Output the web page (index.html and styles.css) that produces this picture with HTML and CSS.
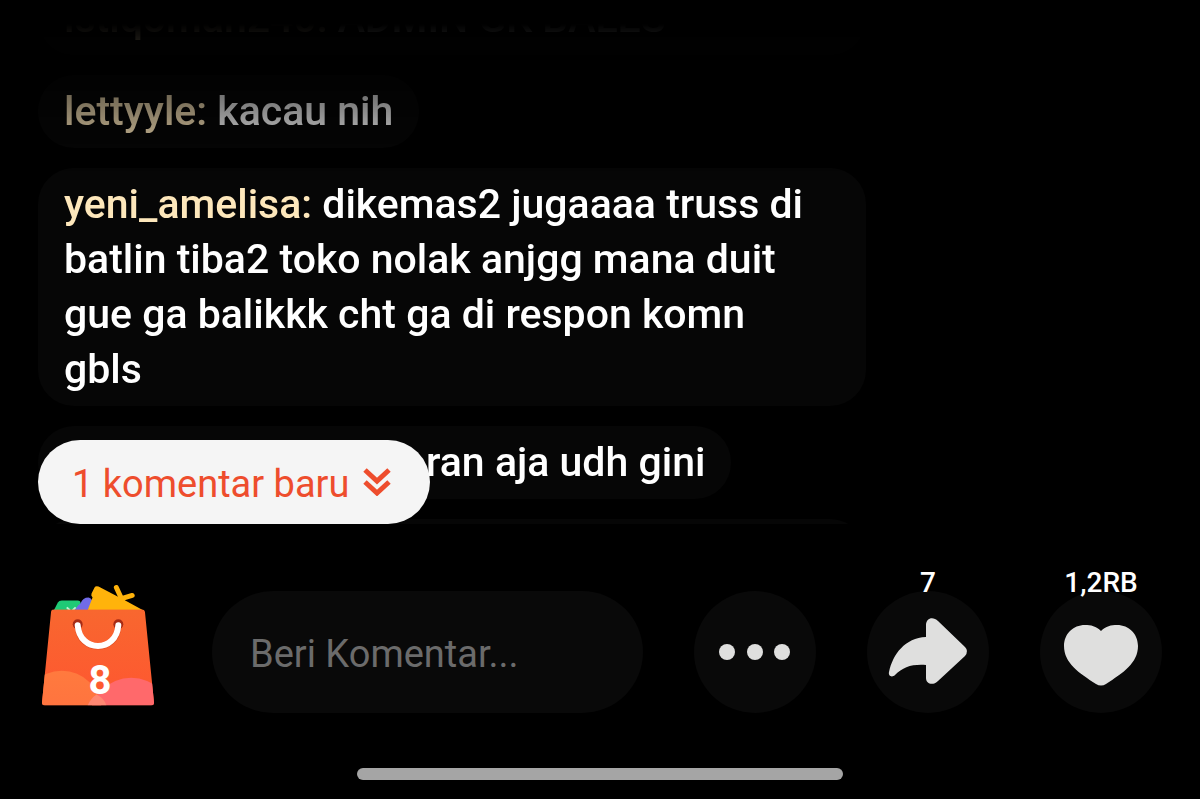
FILE: index.html
```html
<!DOCTYPE html>
<html lang="id">
<head>
<meta charset="utf-8">
<meta name="viewport" content="width=device-width, initial-scale=1">
<title>Live</title>
<link rel="stylesheet" href="styles.css">
</head>
<body>
<main class="feed">
  <div class="feed-fade">
    <ul class="comments">
      <li class="comment comment-wide"><span class="user">istiqomah240:</span> ADMIN GK BALES</li>
      <li class="comment"><span class="user">lettyyle:</span> kacau nih</li>
      <li class="comment"><span class="user">yeni_amelisa:</span> dikemas2 jugaaaa truss di batlin tiba2 toko nolak anjgg mana duit gue ga balikkk cht ga di respon komn<br>gbls</li>
      <li class="comment comment-covered">ran aja udh gini</li>
      <li class="comment comment-wide"></li>
    </ul>
  </div>
  <button class="new-comments" type="button">
    <span>1 komentar baru</span>
    <svg class="chevrons" viewBox="0 0 28 28" aria-hidden="true"><path d="M2 2l12 11L26 2M2 14l12 11 12-11"/></svg>
  </button>
</main>
<footer class="actions">
  <button class="bag" type="button" aria-label="Keranjang, 8 produk">
    <svg class="bag-art" viewBox="0 0 114 121" aria-hidden="true">
      <defs>
        <linearGradient id="body" x1="0" y1="0" x2="0" y2="1"><stop offset="0" stop-color="#f8672f"/><stop offset="1" stop-color="#ff5630"/></linearGradient>
        <linearGradient id="left" x1="0" y1="0" x2="0" y2="1"><stop offset="0" stop-color="#ff7a3e"/><stop offset="1" stop-color="#ff6c40"/></linearGradient>
        <clipPath id="shape"><path d="M12 24h88q4 0 4 4l9 90q0 3-3 3H3q-3 0-3-3l9-90q0-4 3-4z"/></clipPath>
      </defs>
      <path d="M12 25l4-8q1-2 4-2h16q3 0 3 3v7z" fill="#1fca76"/>
      <path d="M25 22l3 3M34 22l-3 3" stroke="#b9f5d5" stroke-width="2"/>
      <path d="M33 25q3-5 6-7 2-6 8-6 4 1 4 6l-5 7z" fill="#716be8"/>
      <path d="M46 25l5-13q-2-2-1-4l3-6q1-2 4-1l27 14 18 10z" fill="#ffb30b"/>
      <path d="M75 2l6 13M81 13l10-3" fill="none" stroke="#ffb30b" stroke-width="5" stroke-linecap="round"/>
      <g clip-path="url(#shape)">
        <path d="M0 24h114v97H0z" fill="url(#body)"/>
        <circle cx="20" cy="126" r="40" fill="url(#left)"/>
        <circle cx="90" cy="135" r="42" fill="#ff696b"/>
        <path d="M46 121q3-7 9-11 8 4 10 11z" fill="#ff8772"/>
      </g>
      <circle cx="36" cy="39" r="5" fill="#a72b14"/><circle cx="77" cy="39" r="5" fill="#a72b14"/>
      <path d="M36 42c2 26 39 26 41 0" fill="none" stroke="#c63e1c" stroke-opacity=".5" stroke-width="6"/>
      <path d="M36 40c2 28 39 28 41 0" fill="none" stroke="#fff" stroke-width="6" stroke-linecap="round"/>
    </svg>
    <span class="bag-count">8</span>
  </button>
  <input class="field" type="text" placeholder="Beri Komentar..." aria-label="Beri Komentar">
  <button class="round" type="button" aria-label="Lainnya">
    <svg class="icon" viewBox="0 0 122 122" aria-hidden="true"><circle cx="33" cy="61" r="8"/><circle cx="61" cy="61" r="8"/><circle cx="88" cy="61" r="8"/></svg>
  </button>
  <button class="round" type="button" aria-label="Bagikan">
    <svg class="icon" viewBox="0 0 122 122" aria-hidden="true"><path d="M59 46V34C59 27 66 25 71 30L98 56Q102 60 98 65L71 90C66 95 59 93 59 87V74C45 73 36 76 28 84C25 87 21 85 22 81C26 63 38 47 59 46Z"/></svg>
    <span class="count">7</span>
  </button>
  <button class="round" type="button" aria-label="Suka">
    <svg class="icon" viewBox="0 0 122 122" aria-hidden="true"><path d="M61 40C66 35 71 34 77 34C89 34 98 43 98 55C98 72 83 82 66 93Q61 96 56 93C39 82 24 72 24 55C24 43 33 34 45 34C51 34 56 35 61 40Z"/></svg>
    <span class="count">1,2RB</span>
  </button>
</footer>
<div class="home-bar"></div>
</body>
</html>
```
FILE: styles.css
```css
* { box-sizing: border-box; }

body {
  margin: 0;
  height: 100vh;
  padding: 24px 38px 19px;
  display: flex;
  flex-direction: column;
  background: #000;
  color: #fff;
  font-family: Roboto, sans-serif;
  overflow: hidden;
}

button {
  border: 0;
  padding: 0;
  color: inherit;
  font-family: inherit;
  cursor: pointer;
}

.feed {
  position: relative;
  flex: 1;
  min-height: 0;
}

.feed-fade {
  height: 100%;
  overflow: hidden;
  -webkit-mask-image: linear-gradient(to bottom, transparent 0, #000 160px);
  mask-image: linear-gradient(to bottom, transparent 0, #000 160px);
}

/* The list is scrolled partway past its first comment. */
.comments {
  list-style: none;
  margin: -42px 0 0;
  padding: 0;
  max-width: 828px;
  display: flex;
  flex-direction: column;
  align-items: flex-start;
  gap: 20px;
}

.comment {
  flex: none;
  min-height: 73px;
  padding: 9px 26px;
  border-radius: 36px;
  background: #060606;
  font-size: 41px;
  line-height: 55px;
  font-weight: 500;
}

.comment-covered {
  padding-left: 388px;
}

.comment-wide {
  width: 100%;
}

.user {
  color: #fde7bb;
}

.new-comments {
  position: absolute;
  left: 0;
  bottom: 0;
  height: 84px;
  padding: 4px 39px 0 34px;
  display: flex;
  align-items: center;
  gap: 14px;
  border-radius: 42px;
  background: #f5f5f5;
  color: #ee4d2d;
  font-size: 38px;
}

.chevrons {
  width: 28px;
  height: 28px;
  margin-bottom: 4px;
  fill: none;
  stroke: #ee4d2d;
  stroke-width: 5;
}

.actions {
  margin-top: 67px;
  display: flex;
  align-items: flex-start;
  gap: 51px;
}

.bag {
  position: relative;
  flex: none;
  width: 113px;
  height: 121px;
  margin: -6px 6px 0 4px;
  background: none;
}

.bag-art {
  display: block;
  width: 100%;
  height: 100%;
}

.bag-count {
  position: absolute;
  left: 3px;
  right: 0;
  bottom: 5px;
  font-size: 40px;
  line-height: 40px;
  font-weight: 700;
}

.field {
  flex: 1;
  min-width: 0;
  height: 122px;
  padding: 4px 38px 0;
  border: 0;
  border-radius: 61px;
  background: #090909;
  color: #fff;
  font-family: inherit;
  font-size: 38px;
  outline: 0;
}

.field::placeholder {
  color: #6b6b6b;
  opacity: 1;
}

.round {
  position: relative;
  flex: none;
  width: 122px;
  height: 122px;
  border-radius: 50%;
  background: #090909;
}

.icon {
  display: block;
  width: 100%;
  height: 100%;
  fill: #dfdfde;
}

.count {
  position: absolute;
  left: 0;
  right: 0;
  top: -24px;
  font-size: 28px;
  line-height: 32px;
  font-weight: 500;
}

.home-bar {
  width: 486px;
  max-width: 60%;
  height: 12px;
  margin: 55px auto 0;
  border-radius: 6px;
  background: #a5a5a5;
}
```
